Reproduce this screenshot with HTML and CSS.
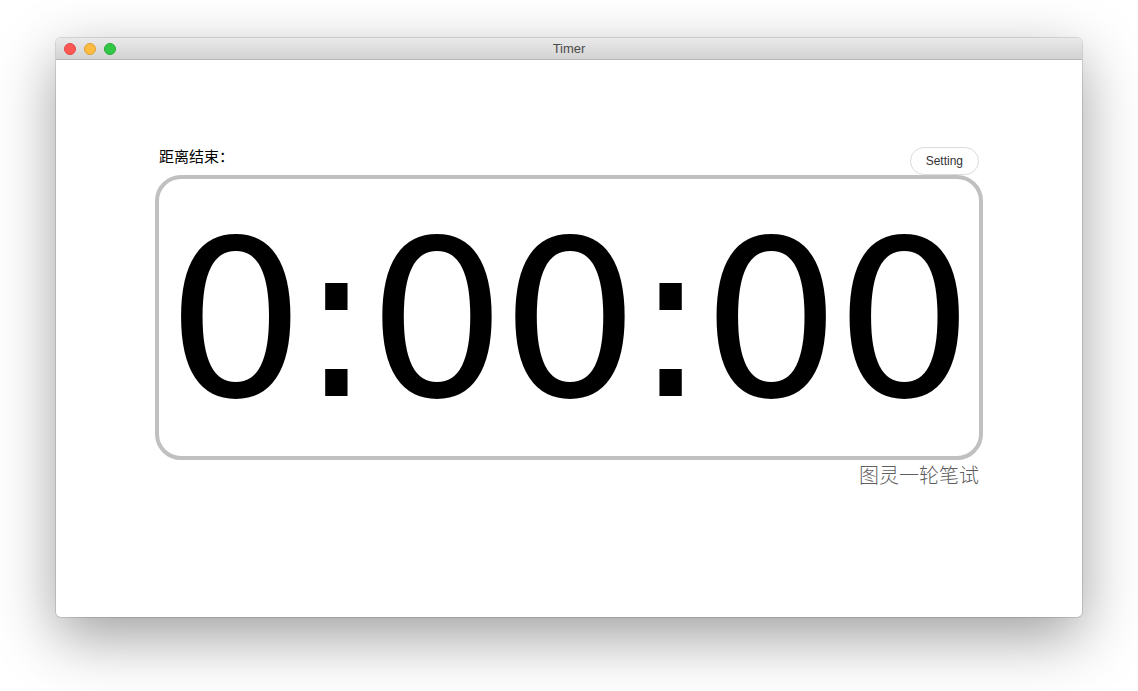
FILE: index.html
```html
<!DOCTYPE html>
<html>
<head>
  <title>Timer</title>
  <link rel="stylesheet" href="styles.css">
</head>
<body>
  <div class="window">
    <div class="titlebar">
      <div class="lights">
        <span class="light red"></span>
        <span class="light yellow"></span>
        <span class="light green"></span>
      </div>
      <div class="title">Timer</div>
    </div>
    <div class="content">
      <div class="timer-head">
        <span class="timer-label">距离结束：</span>
        <button class="setting-btn">Setting</button>
      </div>
      <div class="clock-box">
        <div class="clock">0:00:00</div>
      </div>
      <div class="caption">图灵一轮笔试</div>
    </div>
  </div>
</body>
</html>
```

FILE: styles.css
```css
html, body {
  margin: 0;
  padding: 0;
  background: #ffffff;
}

body {
  width: 1138px;
  height: 691px;
  overflow: hidden;
  font-family: "Liberation Sans", "Noto Sans CJK SC", sans-serif;
}

.window {
  margin: 38px 0 0 56px;
  width: 1026px;
  height: 579px;
  border-radius: 5px;
  background: #ffffff;
  overflow: hidden;
  box-shadow: 0 0 0 1px rgba(0, 0, 0, 0.12), 0 20px 60px rgba(0, 0, 0, 0.38);
}

.titlebar {
  position: relative;
  height: 21px;
  background: linear-gradient(#e9e9e9, #d3d3d3);
  border-bottom: 1px solid #b8b8b8;
  display: flex;
  align-items: center;
  justify-content: center;
}

.lights {
  position: absolute;
  left: 8px;
  top: 5px;
  display: flex;
  gap: 8px;
}

.light {
  width: 12px;
  height: 12px;
  border-radius: 50%;
  box-sizing: border-box;
}

.red { background: #fc5753; border: 1px solid #df4744; }
.yellow { background: #fdbc40; border: 1px solid #de9f34; }
.green { background: #33c748; border: 1px solid #27aa35; }

.title {
  font-size: 13px;
  color: #4a4a4a;
}

.content {
  padding: 85px 99px 0 99px;
}

.timer-head {
  display: flex;
  justify-content: space-between;
  align-items: flex-end;
  padding: 0 4px 0 4px;
}

.timer-label {
  font-size: 15px;
  color: #000000;
  margin-bottom: 9px;
}

.setting-btn {
  height: 28px;
  padding: 0 15px;
  border: 1px solid #dcdcdc;
  border-radius: 14px;
  background: #ffffff;
  font-family: "Liberation Sans", sans-serif;
  font-size: 12px;
  color: #333333;
}

.clock-box {
  height: 277px;
  border: 4px solid #c0c0c0;
  border-radius: 26px;
  display: flex;
  align-items: center;
  justify-content: center;
}

.clock {
  font-family: "DejaVu Sans", sans-serif;
  font-size: 217px;
  letter-spacing: -5px;
  margin-right: 3px;
  line-height: 1;
  color: #000000;
  margin-top: 8px;
}

.caption {
  text-align: right;
  padding-right: 4px;
  margin-top: 0;
  font-size: 20px;
  font-weight: 300;
  color: #5e5e5e;
  font-family: "Noto Sans CJK SC", sans-serif;
}
```
